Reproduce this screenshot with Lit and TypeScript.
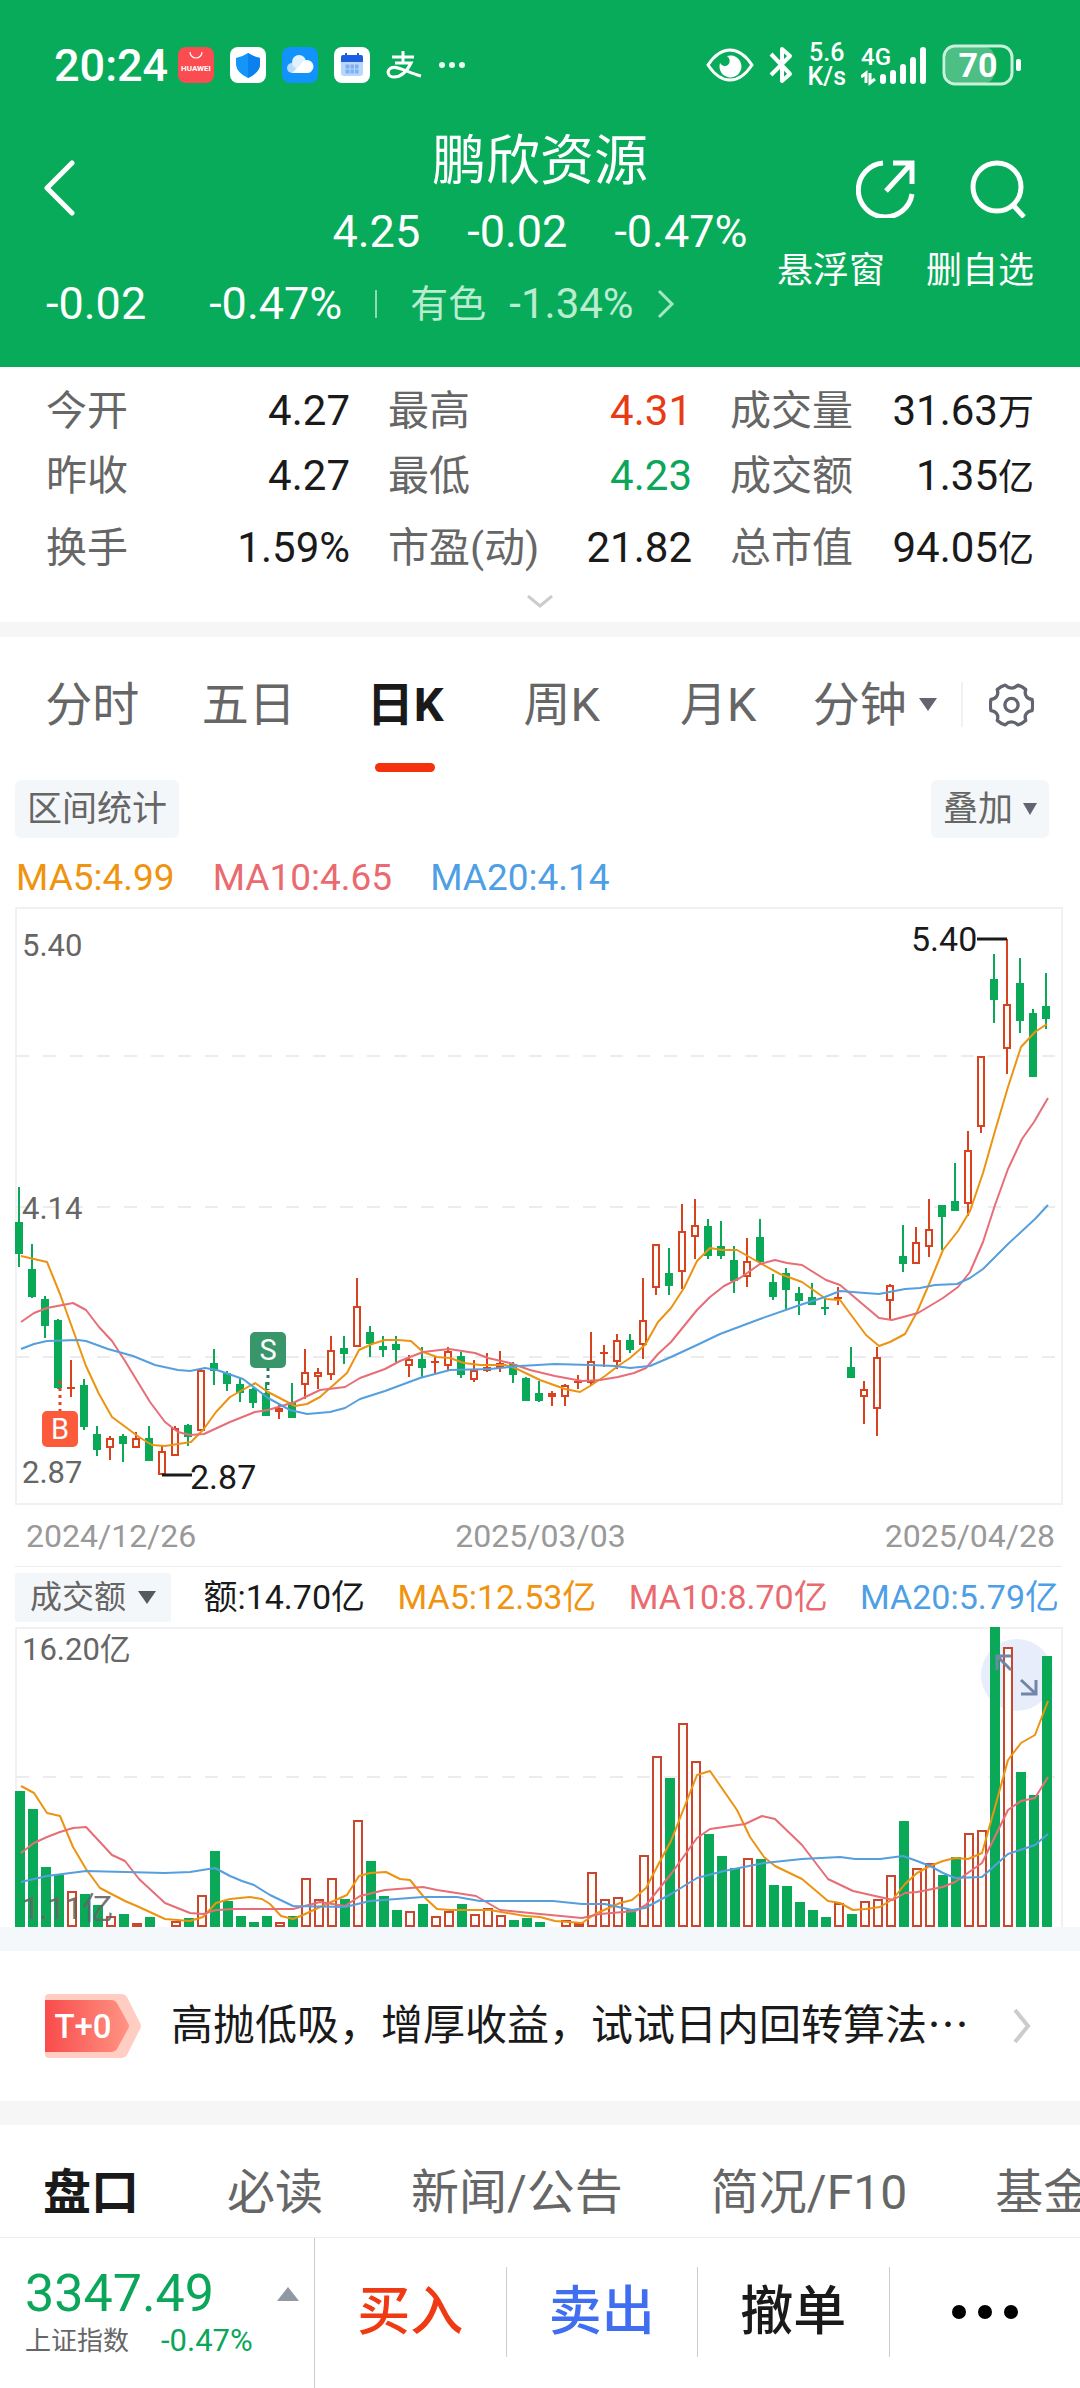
import { LitElement, html, svg, css } from "lit";
import { customElement, property } from "lit/decorators.js";
import { classMap } from "lit/directives/class-map.js";

type Point = [number, number];
/** high, body top, body bottom, low (chart levels, growing downwards) and colour */
type Candle = [number, number, number, number, "r" | "g"];

const CANDLES: Candle[] = [
  [714, 801, 880, 914, "g"], [857, 918, 987, 990, "g"], [985, 993, 1060, 1090, "g"], [1043, 1046, 1215, 1216, "g"],
  [1145, 1211, 1215, 1238, "r"], [1192, 1206, 1311, 1318, "g"], [1309, 1328, 1369, 1383, "g"], [1334, 1339, 1363, 1393, "r"],
  [1330, 1333, 1354, 1398, "g"], [1325, 1339, 1363, 1365, "r"], [1308, 1339, 1395, 1395, "g"], [1360, 1371, 1432, 1432, "r"],
  [1309, 1313, 1384, 1384, "r"], [1304, 1307, 1337, 1360, "g"], [1168, 1169, 1321, 1322, "r"], [1118, 1152, 1172, 1207, "g"],
  [1171, 1178, 1204, 1222, "g"], [1190, 1205, 1228, 1249, "g"], [1215, 1217, 1252, 1265, "g"], [1200, 1228, 1284, 1284, "g"],
  [1256, 1264, 1274, 1291, "r"], [1202, 1249, 1288, 1288, "g"], [1118, 1174, 1208, 1243, "r"], [1165, 1175, 1186, 1217, "r"],
  [1086, 1121, 1183, 1195, "r"], [1086, 1115, 1130, 1154, "g"], [942, 1010, 1112, 1112, "r"], [1059, 1074, 1104, 1137, "g"],
  [1086, 1110, 1119, 1137, "g"], [1086, 1104, 1119, 1150, "g"], [1132, 1143, 1161, 1186, "r"], [1112, 1143, 1166, 1188, "g"],
  [1135, 1148, 1152, 1176, "r"], [1112, 1123, 1161, 1170, "r"], [1124, 1136, 1183, 1190, "g"], [1145, 1170, 1194, 1200, "r"],
  [1128, 1163, 1172, 1174, "r"], [1122, 1153, 1166, 1174, "r"], [1150, 1155, 1183, 1201, "g"], [1187, 1190, 1247, 1247, "g"],
  [1197, 1228, 1247, 1249, "g"], [1223, 1228, 1237, 1259, "r"], [1205, 1207, 1236, 1259, "r"], [1182, 1198, 1202, 1217, "r"],
  [1075, 1148, 1203, 1208, "r"], [1107, 1126, 1130, 1163, "r"], [1080, 1095, 1150, 1168, "r"], [1080, 1095, 1119, 1127, "g"],
  [942, 1046, 1108, 1143, "r"], [855, 856, 965, 984, "r"], [867, 929, 960, 984, "g"], [756, 823, 927, 968, "r"],
  [745, 808, 838, 893, "r"], [794, 812, 886, 893, "g"], [798, 860, 886, 893, "g"], [862, 897, 949, 978, "g"],
  [841, 898, 938, 962, "r"], [793, 839, 900, 907, "g"], [932, 951, 987, 995, "g"], [915, 929, 970, 1017, "g"],
  [962, 977, 997, 1032, "g"], [952, 988, 1007, 1008, "g"], [994, 1013, 1017, 1032, "g"], [963, 987, 993, 1009, "r"],
  [1112, 1162, 1189, 1190, "g"], [1197, 1217, 1236, 1303, "r"], [1112, 1137, 1267, 1335, "r"], [956, 957, 997, 1042, "r"],
  [809, 886, 906, 925, "g"], [814, 850, 906, 907, "r"], [745, 818, 863, 889, "r"], [759, 759, 789, 870, "g"],
  [655, 749, 773, 774, "g"], [575, 622, 757, 787, "r"], [388, 388, 566, 580, "r"], [134, 196, 248, 305, "g"],
  [97, 260, 370, 432, "r"], [144, 207, 300, 330, "g"], [271, 281, 440, 440, "g"], [182, 265, 296, 320, "g"],
];

/** top level of each turnover bar; 1191 is the base line */
const TURNOVER = [
  783, 837, 1010, 1035, 1084, 1092, 1125, 1157, 1152, 1180, 1161, 1184, 1173, 1165, 1094, 963, 1114, 1158, 1176, 1158,
  1176, 1158, 1045, 1108, 1043, 1108, 871, 992, 1098, 1140, 1143, 1122, 1157, 1143, 1122, 1152, 1135, 1154, 1171, 1165,
  1176, 1189, 1170, 1180, 1027, 1108, 1100, 1140, 975, 677, 743, 580, 692, 911, 978, 1015, 985, 987, 1064, 1067,
  1115, 1140, 1160, 1118, 1152, 1113, 1108, 1034, 873, 1015, 1000, 1034, 981, 909, 900, 291, 350, 727, 795, 377,
];

const PRICE_MA5: Point[] = [[21,886],[47,902],[60,980],[86,1160],[99,1230],[112,1287],[139,1337],[152,1357],[165,1359],[191,1350],[203,1320],[216,1275],[230,1238],[255,1203],[268,1225],[295,1260],[307,1255],[320,1238],[347,1178],[359,1120],[372,1105],[385,1096],[397,1095],[411,1098],[423,1125],[437,1137],[450,1139],[464,1153],[480,1158],[505,1158],[515,1165],[540,1195],[565,1218],[580,1225],[590,1210],[605,1185],[618,1160],[630,1140],[645,1108],[658,1050],[671,1016],[684,965],[697,898],[710,867],[722,871],[737,871],[760,903],[780,932],[802,950],[826,994],[840,995],[866,1082],[879,1109],[890,1100],[905,1080],[917,1025],[930,950],[943,870],[958,825],[970,775],[983,680],[995,575],[1008,465],[1021,365],[1035,328],[1047,309]];
const PRICE_MA10: Point[] = [[21,1051],[34,1028],[47,1015],[73,1003],[86,1020],[99,1062],[112,1097],[125,1148],[150,1250],[165,1298],[178,1323],[190,1332],[204,1329],[230,1298],[255,1275],[268,1270],[295,1250],[320,1220],[345,1212],[360,1190],[385,1167],[400,1147],[423,1125],[449,1118],[475,1128],[488,1141],[510,1152],[530,1170],[555,1185],[582,1198],[600,1194],[618,1187],[634,1178],[646,1166],[658,1130],[671,1100],[684,1060],[697,1020],[710,988],[724,960],[740,942],[760,905],[775,895],[787,903],[802,909],[826,945],[840,959],[866,1014],[879,1040],[892,1046],[918,1028],[943,990],[958,962],[970,925],[983,850],[995,760],[1008,670],[1022,595],[1034,552],[1048,494]];
const PRICE_MA20: Point[] = [[21,1118],[34,1105],[47,1097],[78,1095],[86,1098],[108,1117],[133,1135],[155,1157],[178,1169],[190,1172],[205,1166],[217,1170],[243,1192],[268,1239],[290,1270],[307,1279],[330,1275],[345,1265],[360,1243],[385,1222],[420,1190],[450,1170],[490,1167],[520,1160],[555,1155],[590,1158],[615,1161],[630,1164],[650,1160],[671,1138],[697,1107],[720,1081],[760,1042],[800,1008],[825,987],[840,972],[865,977],[879,981],[905,967],[920,965],[935,959],[957,955],[970,942],[983,918],[1008,855],[1035,795],[1048,760]];

const TURN_MA5: Point[] = [[21,768],[34,790],[47,848],[60,857],[73,950],[86,1018],[100,1073],[125,1112],[139,1132],[152,1150],[165,1167],[190,1172],[203,1160],[216,1120],[230,1106],[250,1102],[262,1106],[270,1122],[281,1158],[293,1167],[303,1156],[320,1130],[347,1095],[359,1038],[370,1028],[386,1026],[400,1046],[410,1050],[423,1098],[437,1137],[450,1140],[490,1140],[525,1158],[540,1162],[555,1172],[582,1178],[595,1152],[620,1118],[632,1111],[646,1073],[658,1005],[671,932],[684,835],[697,735],[710,722],[737,840],[750,920],[764,980],[775,1008],[802,1048],[828,1112],[840,1120],[853,1139],[866,1138],[880,1130],[893,1108],[905,1062],[917,1028],[930,1008],[943,993],[955,984],[968,988],[982,968],[995,830],[1008,690],[1021,638],[1035,615],[1048,512]];
const TURN_MA10: Point[] = [[21,968],[34,938],[47,920],[60,905],[73,895],[86,891],[112,974],[125,992],[139,1047],[165,1120],[190,1150],[203,1151],[216,1139],[235,1137],[293,1136],[320,1115],[345,1128],[360,1098],[385,1080],[423,1070],[437,1080],[476,1097],[500,1140],[540,1152],[582,1163],[600,1152],[635,1142],[646,1125],[671,1032],[697,925],[710,898],[724,892],[745,882],[762,857],[775,866],[802,945],[828,1047],[853,1083],[893,1111],[905,1090],[917,1086],[943,1070],[955,1055],[982,998],[1008,840],[1021,812],[1035,803],[1048,740]];
const TURN_MA20: Point[] = [[21,1057],[47,1037],[86,1022],[165,1029],[190,1027],[215,1015],[230,1037],[242,1054],[254,1064],[270,1095],[293,1128],[345,1132],[370,1113],[423,1102],[457,1100],[480,1112],[553,1112],[582,1123],[605,1123],[632,1140],[645,1135],[671,1093],[697,1045],[724,1024],[764,1000],[802,988],[840,981],[855,988],[880,988],[903,978],[917,992],[930,1008],[943,1030],[955,1044],[982,1040],[1008,972],[1035,945],[1048,913]];

const priceY = (level: number) => Math.round(level * 0.4018 - 7);
const turnoverY = (level: number) => Math.round(level / 3 - 97);
const polyline = (points: Point[], y: (level: number) => number) => points.map(([x, level]) => `${x},${y(level)}`).join(" ");

const FONT = css`
  Roboto, "Noto Sans CJK SC", sans-serif
`;

@customElement("price-chart")
class PriceChart extends LitElement {
  static styles = css`
    :host { display: block; }
    svg { display: block; width: 100%; height: auto; font-family: ${FONT}; }
    .frame { fill: none; stroke: #f1f1f3; stroke-width: 2; }
    .grid { stroke: #ececee; stroke-width: 2; stroke-dasharray: 13 14; }
    .r { stroke: #d9421f; stroke-width: 2; fill: #fffdfa; }
    .g { stroke: #0aa957; stroke-width: 2; fill: #0aa957; }
    .line { fill: none; stroke-width: 2; stroke-linejoin: round; }
    .ma5 { stroke: #ec9412; }
    .ma10 { stroke: #e76e76; }
    .ma20 { stroke: #559fdf; }
    .axis { font-size: 31px; fill: #666; }
    .extreme { font-size: 34px; fill: #1a1a1a; }
    .pointer { stroke: #1a1a1a; stroke-width: 3; }
    .mark { font-size: 29px; fill: #fff; text-anchor: middle; }
    .buy { fill: #fb5a3b; }
    .sell { fill: #38966a; }
    .stem { stroke-width: 3; stroke-dasharray: 3 4; }
    .stem-buy { stroke: #e0452a; }
    .stem-sell { stroke: #2c7a55; }
  `;

  render() {
    return html`
      <svg viewBox="0 0 1080 599" role="img" aria-label="日K">
        <rect class="frame" x="16" y="1" width="1046" height="596"></rect>
        ${[149, 300, 450].map((y) => svg`<line class="grid" x1="16" x2="1062" y1=${y} y2=${y}></line>`)}
        <text class="axis" x="22" y="49">5.40</text>
        <text class="axis" x="22" y="312">4.14</text>
        <text class="axis" x="22" y="576">2.87</text>
        ${CANDLES.map(([high, top, bottom, low, tone], i) => {
          const x = 19 + i * 13;
          const y = priceY(top);
          const height = Math.max(priceY(bottom) - y - 2, 0);
          return svg`
            <g class=${tone}>
              <line x1=${x} x2=${x} y1=${priceY(high)} y2=${priceY(low)}></line>
              <rect x=${x - 3} y=${y + 1} width="6" height=${height}></rect>
              ${height === 0 ? svg`<line x1=${x - 4} x2=${x + 4} y1=${y + 1} y2=${y + 1}></line>` : ""}
            </g>`;
        })}
        <polyline class="line ma5" points=${polyline(PRICE_MA5, priceY)}></polyline>
        <polyline class="line ma10" points=${polyline(PRICE_MA10, priceY)}></polyline>
        <polyline class="line ma20" points=${polyline(PRICE_MA20, priceY)}></polyline>
        <line class="stem stem-buy" x1="60" x2="60" y1="474" y2="504"></line>
        <rect class="buy" x="42" y="504" width="36" height="36" rx="5"></rect>
        <text class="mark" x="60" y="532">B</text>
        <line class="stem stem-sell" x1="268" x2="268" y1="461" y2="483"></line>
        <rect class="sell" x="250" y="425" width="36" height="36" rx="5"></rect>
        <text class="mark" x="268" y="453">S</text>
        <line class="pointer" x1="162" x2="192" y1="568" y2="568"></line>
        <text class="extreme" x="190" y="582">2.87</text>
        <line class="pointer" x1="977" x2="1007" y1="32" y2="32"></line>
        <text class="extreme" x="911" y="44">5.40</text>
      </svg>
    `;
  }
}

@customElement("turnover-chart")
class TurnoverChart extends LitElement {
  static styles = css`
    :host { display: block; position: relative; }
    svg { display: block; position: relative; width: 100%; height: auto; pointer-events: none; font-family: ${FONT}; }
    .expand { position: absolute; top: 12px; right: 27px; width: 72px; height: 72px; border: 0; border-radius: 50%; background: #e7edfb; }
    .frame { fill: none; stroke: #f1f1f3; stroke-width: 2; }
    .grid { stroke: #ececee; stroke-width: 2; stroke-dasharray: 13 14; }
    .r { stroke: #c9472f; stroke-width: 2; fill: #fffdfa; }
    .g { fill: #0aa957; }
    .line { fill: none; stroke-width: 2; stroke-linejoin: round; }
    .ma5 { stroke: #ec9412; }
    .ma10 { stroke: #e76e76; }
    .ma20 { stroke: #559fdf; }
    .axis { font-size: 31px; fill: #666; }
    .low { opacity: 0.9; }
    .arrow { fill: none; stroke: #7186a8; stroke-width: 3; }
  `;

  render() {
    return html`
      <button class="expand" aria-label="全屏"></button>
      <svg viewBox="0 0 1080 300" role="img" aria-label="成交额">
        <path class="frame" d="M16 300V1H1062V300"></path>
        <line class="grid" x1="16" x2="1062" y1="150" y2="150"></line>
        <text class="axis" x="22" y="33">16.20亿</text>
        ${TURNOVER.map((level, i) => {
          const x = 15 + i * 13;
          const y = turnoverY(level);
          return CANDLES[i][4] === "g"
            ? svg`<rect class="g" x=${x} y=${y} width="10" height=${300 - y}></rect>`
            : svg`<rect class="r" x=${x + 1} y=${y + 1} width="8" height=${Math.max(298 - y, 0)}></rect>`;
        })}
        <text class="axis low" x="22" y="292">1.11亿</text>
        <polyline class="line ma5" points=${polyline(TURN_MA5, turnoverY)}></polyline>
        <polyline class="line ma10" points=${polyline(TURN_MA10, turnoverY)}></polyline>
        <polyline class="line ma20" points=${polyline(TURN_MA20, turnoverY)}></polyline>
        <path class="arrow" d="M1011 29H997V43M997 29L1011 43M1021 67H1036V53M1036 67L1021 53"></path>
      </svg>
    `;
  }
}

@customElement("status-bar")
class StatusBar extends LitElement {
  static styles = css`
    :host { display: flex; align-items: center; justify-content: space-between; height: 130px; padding: 0 58px 0 54px; color: #fff; font-family: ${FONT}; }
    svg { display: block; flex: none; }
    .left, .right { display: flex; align-items: center; }
    .left { gap: 16px; }
    .time { font-size: 45px; font-weight: 500; margin-right: -6px; }
    .right { gap: 15px; }
    .speed { display: flex; flex-direction: column; align-items: center; font-size: 25px; line-height: 24px; font-weight: 500; }
    .brand { font-size: 8px; font-weight: 700; fill: #fff; text-anchor: middle; }
    .cell { font-size: 24px; font-weight: 500; fill: #fff; }
    .level { font-size: 34px; font-weight: 700; fill: #fff; text-anchor: middle; }
  `;

  render() {
    return html`
      <div class="left">
        <span class="time">20:24</span>
        <svg width="36" height="36" viewBox="0 0 36 36">
          <rect width="36" height="36" rx="8" fill="#fb4c51"></rect>
          <path d="M12 5a6 6 0 0 0 12 0" fill="none" stroke="#fff" stroke-width="1.2"></path>
          <text class="brand" x="18" y="24">HUAWEI</text>
        </svg>
        <svg width="36" height="36" viewBox="0 0 36 36">
          <rect width="36" height="36" rx="8" fill="#fff"></rect>
          <path d="M18 6Q24 10 30 11V18Q29 26 18 31Q7 26 6 18V11Q12 10 18 6Z" fill="#1595f7"></path>
          <path d="M18 6Q24 10 30 11V18Q29 26 18 31Z" fill="#0b80ef"></path>
        </svg>
        <svg width="36" height="36" viewBox="0 0 36 36">
          <rect width="36" height="36" rx="8" fill="#1193fb"></rect>
          <circle cx="10" cy="21" r="5" fill="#b8dcfb"></circle>
          <circle cx="17" cy="15" r="7" fill="#e2f1fe"></circle>
          <path d="M10 26L19 17A6.500 6.500 0 1 1 25 26Z" fill="#fff"></path>
        </svg>
        <svg width="36" height="36" viewBox="0 0 36 36">
          <rect width="36" height="36" rx="8" fill="#fff"></rect>
          <rect x="7" y="9" width="22" height="20" rx="3" fill="#b9d6fb"></rect>
          <path d="M7 15V10Q7 8 9 8H27Q29 8 29 10V15Z" fill="#1b5fe0"></path>
          <path d="M12 6V10M24 6V10" stroke="#1b5fe0" stroke-width="2"></path>
          <path d="M11 17H25V27H11ZM11 22H25M16 17V27M20.500 17V27" fill="#7fb0f3" stroke="#b9d6fb"></path>
        </svg>
        <svg width="36" height="36" viewBox="0 0 36 36" fill="none" stroke="#fff" stroke-width="3">
          <path d="M6 10H28M17 4V15M9 16H25C22 22 16 30 8 30C2 30 0 24 5 21C12 18 22 26 35 29" ></path>
        </svg>
        <svg width="28" height="8" viewBox="0 0 28 8" fill="#e9faf0">
          <circle cx="4" cy="4" r="3"></circle><circle cx="14" cy="4" r="3"></circle><circle cx="24" cy="4" r="3"></circle>
        </svg>
      </div>
      <div class="right">
        <svg width="48" height="34" viewBox="0 0 48 34">
          <path d="M2 17Q12 2 24 2T46 17Q36 32 24 32T2 17Z" fill="none" stroke="#fff" stroke-width="3"></path>
          <path d="M21 8A11 11 0 1 1 14 15Q17 20 22 17Q26 12 21 8Z" fill="#fff"></path>
        </svg>
        <svg width="24" height="38" viewBox="0 0 24 38" fill="none" stroke="#fff" stroke-width="4" stroke-linejoin="round">
          <path d="M2 8L21 28L13 35V3L21 10L2 29"></path>
        </svg>
        <div class="speed"><span>5.6</span><span>K/s</span></div>
        <svg width="66" height="50" viewBox="0 -6 66 50" fill="#fff">
          <text class="cell" x="0" y="19">4G</text>
          <path d="M5 37V27L0 31M9 27V37L14 33" fill="none" stroke="#fff" stroke-width="3"></path>
          <rect x="19" y="28" width="6" height="10" rx="3"></rect>
          <rect x="29" y="24" width="6" height="14" rx="3"></rect>
          <rect x="39" y="18" width="6" height="20" rx="3"></rect>
          <rect x="49" y="11" width="6" height="27" rx="3"></rect>
          <rect x="59" y="1" width="6" height="37" rx="3"></rect>
        </svg>
        <svg width="80" height="42" viewBox="0 0 80 42">
          <rect x="4" y="3" width="48" height="36" rx="9" fill="#4dbf85"></rect>
          <rect x="2" y="2" width="68" height="38" rx="11" fill="none" stroke="#c9f0da" stroke-width="3"></rect>
          <rect x="74" y="15" width="5" height="12" rx="2" fill="#fff"></rect>
          <text class="level" x="36" y="33">70</text>
        </svg>
      </div>
    `;
  }
}

@customElement("stat-item")
class StatItem extends LitElement {
  @property() label = "";
  @property() value = "";
  @property() unit = "";
  @property() tone = "";

  static styles = css`
    :host { display: flex; align-items: center; justify-content: space-between; font-family: ${FONT}; white-space: nowrap; }
    .label { font-size: 41px; color: #666; }
    .value { font-size: 42px; color: #1a1a1a; }
    .unit { font-size: 36px; }
    .up { color: #e93a16; }
    .down { color: #0ba65a; }
  `;

  render() {
    return html`
      <span class="label">${this.label}</span>
      <span class=${classMap({ value: true, up: this.tone === "up", down: this.tone === "down" })}
        >${this.value}${this.unit ? html`<span class="unit">${this.unit}</span>` : ""}</span>
    `;
  }
}

@customElement("app-root")
class AppRoot extends LitElement {
  static styles = css`
    :host { display: block; background: #fff; color: #1a1a1a; font-family: ${FONT}; line-height: 1; overflow: hidden; }
    * { box-sizing: border-box; }
    button { margin: 0; padding: 0; border: 0; background: none; color: inherit; font: inherit; white-space: nowrap; }
    a { color: inherit; text-decoration: none; }
    svg { display: block; flex: none; }
    h1 { margin: 0; font-weight: 400; }

    .head { background: #08ab59; color: #fff; padding-bottom: 47px; }
    .head-main { display: grid; grid-template-columns: 1fr auto 1fr; height: 158px; }
    .back { justify-self: start; align-self: start; padding: 30px 44px; }
    .title { font-size: 54px; line-height: 64px; text-align: center; }
    .quote { display: flex; justify-content: center; gap: 47px; margin-top: 12px; font-size: 45px; line-height: 52px; }
    .actions { display: flex; justify-content: flex-end; gap: 10px; padding: 30px 46px 0 0; }
    .action { display: flex; flex-direction: column; align-items: flex-start; gap: 35px; font-size: 36px; line-height: 36px; }
    .float { width: 139px; }
    .action svg { align-self: flex-end; }
    .find svg { margin-right: 8px; }
    .head-sub { display: flex; align-items: center; padding: 0 46px; font-size: 45px; line-height: 32px; }
    .change { margin-right: 63px; }
    .bar { width: 2px; height: 28px; margin: 0 33px; background: #8fdcb4; }
    .sector { display: flex; align-items: center; gap: 23px; color: #b9ecd0; font-size: 42px; }
    .sector-name { font-size: 38px; }

    .stats { display: grid; grid-template-columns: repeat(3, 1fr); grid-template-rows: 62px 68px 76px; column-gap: 38px; padding: 13px 46px 0; }
    .more { display: block; margin: 0 auto; padding: 9px 40px 14px; }
    .band { height: 15px; background: #f6f6f6; }
    .band-wide { height: 24px; }
    .band-cool { background: #f5f8fb; }

    .periods { display: flex; align-items: center; height: 135px; padding: 0 46px 0 14px; }
    .period { flex: 1; display: flex; align-items: center; justify-content: center; position: relative; height: 135px; gap: 12px; font-size: 47px; color: #666; }
    .active { font-weight: 700; color: #1a1a1a; }
    .active::after { content: ""; position: absolute; left: 50%; bottom: 0; width: 60px; height: 9px; margin-left: -30px; border-radius: 5px; background: #f5310d; }
    .rule { width: 2px; height: 45px; margin: 0 26px 0 8px; background: #f1f1f3; }

    .tools { display: flex; justify-content: space-between; padding: 8px 31px 0 15px; }
    .tool { display: flex; align-items: center; gap: 10px; height: 58px; padding: 0 12px; border-radius: 6px; background: #f4f7f9; font-size: 35px; color: #666; }
    .averages { display: flex; gap: 38px; padding: 9px 16px 0; font-size: 37px; line-height: 62px; height: 69px; }
    .c5 { color: #f0930f; }
    .c10 { color: #ea6a70; }
    .c20 { color: #4f9fe6; }
    .dates { display: flex; justify-content: space-between; margin: 0 18px 0 15px; padding: 0 7px 0 11px; font-size: 32px; line-height: 60px; color: #999; }
    .turnover { display: flex; align-items: center; justify-content: space-between; height: 61px; margin: 0 18px 0 15px; padding-right: 3px; border-top: 1px solid #ededf0; font-size: 34px; white-space: nowrap; }
    .turnover .tool { height: 49px; padding: 0 15px; gap: 12px; border-radius: 2px; font-size: 32px; }

    .promo { display: flex; align-items: center; height: 150px; padding: 0 49px 0 45px; }
    .promo-text { flex: 1; margin-left: 30px; font-size: 42px; white-space: nowrap; }
    .badge-text { font-size: 33px; font-weight: 500; fill: #fff; text-anchor: middle; }

    .sections { display: flex; gap: 88px; height: 112px; padding: 22px 0 0 43px; overflow: hidden; font-size: 48px; line-height: 92px; color: #666; }
    .section { flex: none; }
    .current { font-weight: 700; color: #1a1a1a; }

    .foot { display: flex; height: 151px; border-top: 1px solid #ececec; }
    .index { display: flex; justify-content: space-between; width: 315px; padding: 31px 15px 0 25px; border-right: 1px solid #ccc; }
    .index-main { display: flex; flex-direction: column; align-items: flex-start; }
    .index-value { font-size: 52px; line-height: 50px; color: #0ba65a; }
    .index-row { display: flex; align-items: center; gap: 32px; font-size: 31px; line-height: 44px; color: #0ba65a; }
    .index-name { font-size: 26px; color: #666; }
    .index svg { margin-top: 18px; }
    .trades { flex: 1; display: flex; align-items: center; padding-bottom: 2px; }
    .trade { flex: 1; display: flex; align-items: center; justify-content: center; height: 90px; border-right: 1px solid #ccc; font-size: 53px; font-weight: 500; }
    .trade:last-child { border-right: 0; }
    .buy { color: #f03a14; }
    .sell { color: #3f6ff0; }
  `;

  private caret(width: number, height: number, fill = "#62656f") {
    return html`<svg width=${width} height=${height} viewBox="0 0 16 12" preserveAspectRatio="none"><path d="M0 0H16L8 12Z" fill=${fill}></path></svg>`;
  }

  render() {
    return html`
      <header class="head">
        <status-bar></status-bar>
        <div class="head-main">
          <button class="back" aria-label="返回">
            <svg width="32" height="56" viewBox="0 0 32 56"><path d="M28 3L3 28L28 53" fill="none" stroke="#fff" stroke-width="5" stroke-linecap="round" stroke-linejoin="round"></path></svg>
          </button>
          <div>
            <h1 class="title">鹏欣资源</h1>
            <div class="quote"><span>4.25</span><span>-0.02</span><span>-0.47%</span></div>
          </div>
          <div class="actions">
            <button class="action float">
              <svg width="60" height="58" viewBox="0 0 60 58" fill="none" stroke="#fff" stroke-width="5">
                <path d="M27 3A27 27 0 1 0 56 34"></path>
                <path d="M30 31L54 5M37 3H56V24"></path>
              </svg>
              <span>悬浮窗</span>
            </button>
            <button class="action find">
              <svg width="56" height="58" viewBox="0 0 56 58" fill="none" stroke="#fff" stroke-width="5">
                <circle cx="27" cy="27" r="24"></circle><path d="M43 45L54 57"></path>
              </svg>
              <span>删自选</span>
            </button>
          </div>
        </div>
        <div class="head-sub">
          <span class="change">-0.02</span><span>-0.47%</span>
          <span class="bar"></span>
          <a class="sector" href="#sector">
            <span class="sector-name">有色</span><span>-1.34%</span>
            <svg width="18" height="30" viewBox="0 0 18 30"><path d="M2 2L15 15L2 28" fill="none" stroke="#a6e6c3" stroke-width="3"></path></svg>
          </a>
        </div>
      </header>

      <section>
        <div class="stats">
          <stat-item label="今开" value="4.27"></stat-item>
          <stat-item label="最高" value="4.31" tone="up"></stat-item>
          <stat-item label="成交量" value="31.63" unit="万"></stat-item>
          <stat-item label="昨收" value="4.27"></stat-item>
          <stat-item label="最低" value="4.23" tone="down"></stat-item>
          <stat-item label="成交额" value="1.35" unit="亿"></stat-item>
          <stat-item label="换手" value="1.59%"></stat-item>
          <stat-item label="市盈(动)" value="21.82"></stat-item>
          <stat-item label="总市值" value="94.05" unit="亿"></stat-item>
        </div>
        <button class="more" aria-label="展开">
          <svg width="26" height="13" viewBox="0 0 26 13"><path d="M1 1L13 11L25 1" fill="none" stroke="#ccc" stroke-width="3"></path></svg>
        </button>
      </section>
      <div class="band"></div>

      <section>
        <nav class="periods">
          <button class="period">分时</button>
          <button class="period">五日</button>
          <button class="period active">日K</button>
          <button class="period">周K</button>
          <button class="period">月K</button>
          <button class="period">分钟${this.caret(18, 13)}</button>
          <span class="rule"></span>
          <button aria-label="设置">
            <svg width="45" height="44" viewBox="-68 -66 136 132" fill="none" stroke="#62656f" stroke-width="10" stroke-linejoin="round">
              <path d="M-19 -60Q-10 -51 0 -51Q10 -51 19 -60Q32 -57 43 -47Q39 -33 45 -26Q51 -18 62 -17Q66 0 62 17Q51 18 45 26Q39 33 43 47Q32 57 19 60Q10 51 0 51Q-10 51 -19 60Q-32 57 -43 47Q-39 33 -45 26Q-51 18 -62 17Q-66 0 -62 -17Q-51 -18 -45 -26Q-39 -33 -43 -47Q-32 -57 -19 -60Z"></path>
              <circle r="20"></circle>
            </svg>
          </button>
        </nav>
        <div class="tools">
          <button class="tool">区间统计</button>
          <button class="tool">叠加${this.caret(14, 12)}</button>
        </div>
        <div class="averages">
          <span class="c5">MA5:4.99</span><span class="c10">MA10:4.65</span><span class="c20">MA20:4.14</span>
        </div>
        <price-chart></price-chart>
        <div class="dates"><span>2024/12/26</span><span>2025/03/03</span><span>2025/04/28</span></div>
        <div class="turnover">
          <button class="tool">成交额${this.caret(18, 13, "#555a60")}</button>
          <span>额:14.70亿</span>
          <span class="c5">MA5:12.53亿</span>
          <span class="c10">MA10:8.70亿</span>
          <span class="c20">MA20:5.79亿</span>
        </div>
        <turnover-chart></turnover-chart>
      </section>
      <div class="band band-wide band-cool"></div>

      <a class="promo" href="#t0">
        <svg width="96" height="64" viewBox="0 0 96 64">
          <defs>
            <linearGradient id="warm"><stop offset="0" stop-color="#f94b4b"></stop><stop offset="1" stop-color="#ff9484"></stop></linearGradient>
          </defs>
          <path d="M0 4Q0 0 4 0H76Q80 0 82 3L95 29Q97 32 95 35L82 61Q80 64 76 64H4Q0 64 0 60Z" fill="#ffcdc2"></path>
          <path d="M0 6H66Q70 6 72 9L83 29Q85 32 83 35L72 55Q70 58 66 58H0Z" fill="url(#warm)"></path>
          <text class="badge-text" x="38" y="44">T+0</text>
        </svg>
        <span class="promo-text">高抛低吸，增厚收益，试试日内回转算法⋯</span>
        <svg width="18" height="36" viewBox="0 0 18 36"><path d="M2 2L15 18L2 34" fill="none" stroke="#ccc" stroke-width="4"></path></svg>
      </a>
      <div class="band band-wide"></div>

      <nav class="sections">
        <button class="section current">盘口</button>
        <button class="section">必读</button>
        <button class="section">新闻/公告</button>
        <button class="section">简况/F10</button>
        <button class="section">基金</button>
      </nav>

      <footer class="foot">
        <button class="index">
          <span class="index-main">
            <span class="index-value">3347.49</span>
            <span class="index-row"><span class="index-name">上证指数</span><span>-0.47%</span></span>
          </span>
          <svg width="22" height="14" viewBox="0 0 22 14"><path d="M0 14L11 0L22 14Z" fill="#8f98a3"></path></svg>
        </button>
        <div class="trades">
          <button class="trade buy">买入</button>
          <button class="trade sell">卖出</button>
          <button class="trade">撤单</button>
          <button class="trade" aria-label="更多">
            <svg width="66" height="14" viewBox="0 0 66 14"><circle cx="7" cy="7" r="7"></circle><circle cx="33" cy="7" r="7"></circle><circle cx="59" cy="7" r="7"></circle></svg>
          </button>
        </div>
      </footer>
    `;
  }
}
